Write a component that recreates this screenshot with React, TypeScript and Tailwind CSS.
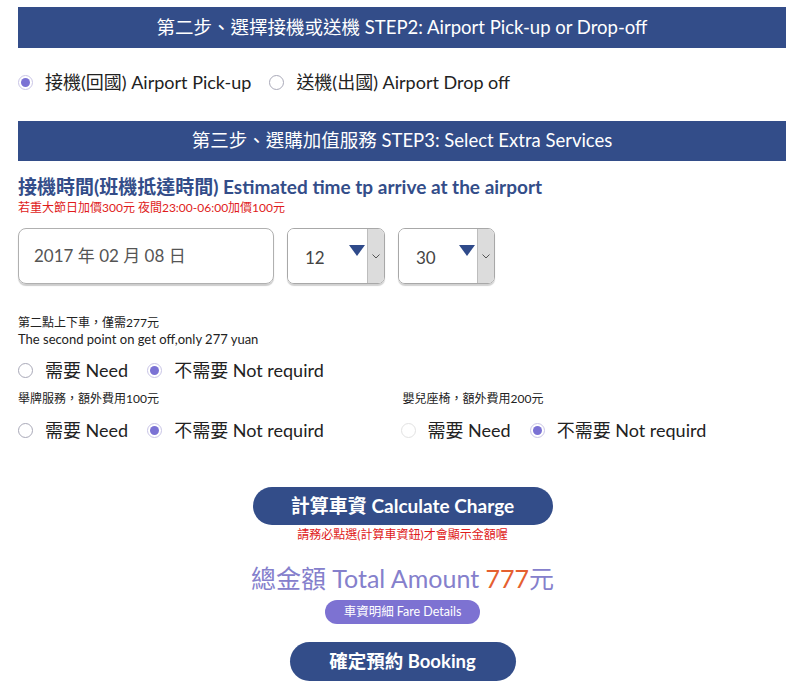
import React from "react";

const FONT = { fontFamily: 'Lato, "Noto Sans CJK TC", sans-serif' };

function Radio({ checked, faint }: { checked?: boolean; faint?: boolean }) {
  return (
    <span
      className={`flex h-[15px] w-[15px] shrink-0 items-center justify-center rounded-full border ${
        checked ? "border-[#c9c5e6] bg-white" : faint ? "border-[#e2e2e2] bg-white" : "border-[#a9a9b8] bg-white"
      }`}
    >
      {checked && <span className="h-[9px] w-[9px] rounded-full bg-[#7b72d4]" />}
    </span>
  );
}

function Option({ checked, label, faint }: { checked?: boolean; label: string; faint?: boolean }) {
  return (
    <div className="flex items-center gap-[12px]">
      <Radio checked={checked} faint={faint} />
      <span className="text-[18px] leading-[26px] text-[#222]">{label}</span>
    </div>
  );
}

function TimeSelect({ value, w }: { value: string; w: string }) {
  return (
    <div className={`flex h-[56px] ${w} overflow-hidden rounded-[7px] border border-[#a8a8a8] shadow-[0_2px_1px_rgba(0,0,0,0.18)]`}>
      <div className="flex flex-1 items-center justify-between bg-white pl-[17px] pr-[2px]">
        <span className="mt-[3px] text-[17px] text-[#444]">{value}</span>
        <svg width="16" height="12" viewBox="0 0 16 12" className="mb-[10px]">
          <polygon points="0,0 16,0 8,11" fill="#2f4a8a" />
        </svg>
      </div>
      <div className="flex w-[17px] items-center justify-center border-l border-[#bdbdbd] bg-[#dcdcdc]">
        <svg width="8" height="5" viewBox="0 0 8 5">
          <polyline points="0.5,0.5 4,4 7.5,0.5" fill="none" stroke="#555" strokeWidth="1" />
        </svg>
      </div>
    </div>
  );
}

export default function App() {
  return (
    <div className="w-[805px] bg-white" style={FONT}>
      <div className="px-[18px] pt-[7px] pb-[18px]">
        <div className="flex h-[41px] w-[768px] items-center justify-center bg-[#334d89] text-[18.5px] text-white">
          第二步、選擇接機或送機 STEP2: Airport Pick-up or Drop-off
        </div>

        <div className="mt-[20px] flex h-[28px] items-center gap-[18px]">
          <Option checked label="接機(回國) Airport Pick-up" />
          <Option label="送機(出國) Airport Drop off" />
        </div>

        <div className="mt-[25px] flex h-[40px] w-[768px] items-center justify-center bg-[#334d89] text-[18.5px] text-white">
          第三步、選購加值服務 STEP3: Select Extra Services
        </div>

        <div className="mt-[15px] text-[19px] font-bold leading-[22px] text-[#334d89]">
          接機時間(班機抵達時間) Estimated time tp arrive at the airport
        </div>
        <div className="mt-[3px] text-[12px] leading-[14px] text-[#e01b1b]">
          若重大節日加價300元 夜間23:00-06:00加價100元
        </div>

        <div className="mt-[13px] flex gap-[13px]">
          <div className="flex h-[56px] w-[256px] items-center rounded-[8px] border border-[#b0b0b0] pl-[15px] shadow-[0_2px_1px_rgba(0,0,0,0.2)]">
            <span className="text-[17px] text-[#555]">2017 年 02 月 08 日</span>
          </div>
          <TimeSelect value="12" w="w-[98px]" />
          <TimeSelect value="30" w="w-[97px]" />
        </div>

        <div className="mt-[31px] text-[12px] leading-[16px] text-[#222]">第二點上下車，僅需277元</div>
        <div className="text-[13px] leading-[16px] text-[#222]">The second point on get off,only 277 yuan</div>
        <div className="mt-[10px] flex items-center gap-[19px]">
          <Option label="需要 Need" />
          <Option checked label="不需要 Not requird" />
        </div>

        <div className="mt-[8px] grid grid-cols-2">
          <div>
            <div className="text-[12px] leading-[16px] text-[#222]">舉牌服務，額外費用100元</div>
            <div className="mt-[10px] flex items-center gap-[19px]">
              <Option label="需要 Need" />
              <Option checked label="不需要 Not requird" />
            </div>
          </div>
          <div>
            <div className="text-[12px] leading-[16px] text-[#222]">嬰兒座椅，額外費用200元</div>
            <div className="mt-[10px] -ml-[2px] flex items-center gap-[19px]">
              <Option faint label="需要 Need" />
              <Option checked label="不需要 Not requird" />
            </div>
          </div>
        </div>

        <div className="mt-[44px] flex flex-col items-center">
          <div className="flex h-[38px] w-[300px] items-center justify-center rounded-full bg-[#334d89] text-[19px] font-bold text-white">
            計算車資 Calculate Charge
          </div>
          <div className="mt-[3px] text-[12px] leading-[14px] text-[#e01b1b]">請務必點選(計算車資鈕)才會顯示金額喔</div>
          <div className="mt-[21px] text-[25px] leading-[30px] text-[#8580cc]">
            總金額 Total Amount <span className="text-[#e5602f]">777</span>元
          </div>
          <div className="mt-[7px] flex h-[24px] w-[155px] items-center justify-center rounded-full bg-[#7d72d2] text-[12.5px] text-white">
            車資明細 Fare Details
          </div>
          <div className="mt-[18px] flex h-[39px] w-[226px] items-center justify-center rounded-full bg-[#334d89] text-[18.5px] font-bold text-white">
            確定預約 Booking
          </div>
        </div>
      </div>
    </div>
  );
}
